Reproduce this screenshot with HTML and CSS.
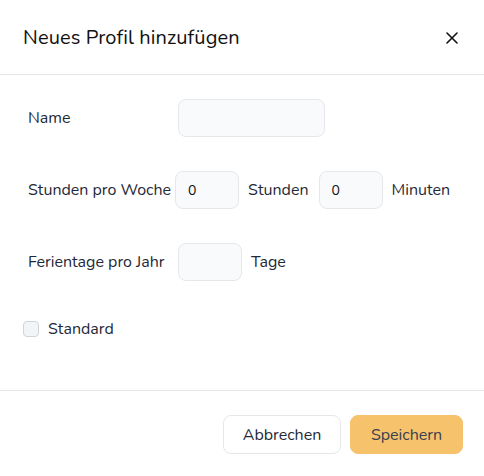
FILE: index.html
```html
<!DOCTYPE html>
<html lang="de">
<head>
<meta charset="utf-8">
<link rel="stylesheet" href="styles.css">
</head>
<body>
<div class="modal">
  <div class="header">
    <h2 class="title">Neues Profil hinzufügen</h2>
    <button class="close" aria-label="Schließen">
      <svg width="12" height="12" viewBox="0 0 12 12"><path d="M1 1L11 11M11 1L1 11" stroke="#111" stroke-width="1.6" stroke-linecap="round"/></svg>
    </button>
  </div>
  <div class="body">
    <div class="row">
      <label class="label">Name</label>
      <input class="input wide" type="text">
    </div>
    <div class="row">
      <label class="label label-auto">Stunden pro Woche</label>
      <input class="input small" type="text" value="0">
      <span class="unit">Stunden</span>
      <input class="input small" type="text" value="0">
      <span class="unit">Minuten</span>
    </div>
    <div class="row">
      <label class="label">Ferientage pro Jahr</label>
      <input class="input small" type="text">
      <span class="unit">Tage</span>
    </div>
    <div class="check-row">
      <span class="checkbox"></span>
      <span class="check-label">Standard</span>
    </div>
  </div>
  <div class="footer">
    <button class="btn btn-cancel">Abbrechen</button>
    <button class="btn btn-save">Speichern</button>
  </div>
</div>
</body>
</html>
```
FILE: styles.css
```css
* { box-sizing: border-box; }
html, body { margin: 0; padding: 0; background: #fff; }
body {
  font-family: "Nunito", "Lato", "Noto Sans", sans-serif;
  color: #1f2937;
  width: 484px;
  height: 476px;
  overflow: hidden;
}
.modal { width: 484px; }
.header {
  height: 75px;
  display: flex;
  align-items: center;
  justify-content: space-between;
  padding: 0 24px 0 23px;
  border-bottom: 1px solid #e5e7eb;
}
.title {
  margin: 0;
  font-size: 20px;
  font-weight: 400;
  color: #111;
  letter-spacing: 0.1px;
}
.close {
  border: 0;
  background: none;
  padding: 0;
  width: 16px;
  height: 16px;
  display: flex;
  align-items: center;
  justify-content: center;
  margin-top: 2px;
}
.body {
  padding: 24px 23px 50px 23px;
  display: flex;
  flex-direction: column;
  gap: 34px;
}
.row {
  display: flex;
  align-items: center;
  height: 38px;
  padding-left: 5px;
  font-size: 16px;
}
.row > * { flex-shrink: 0; }
.label {
  min-width: 146px;
  margin-right: 4px;
  white-space: nowrap;
}
.label-auto { min-width: auto; }
.input {
  height: 38px;
  border: 1px solid #e5e7eb;
  background: #f9fafb;
  border-radius: 8px;
  padding: 0 12px;
  font-family: inherit;
  font-size: 14px;
  color: #111;
  outline: none;
}
.wide { width: 147px; }
.small { width: 64px; }
.unit { margin: 0 10px 0 9px; white-space: nowrap; }
.check-row {
  display: flex;
  align-items: center;
  gap: 9px;
  font-size: 16px;
  margin-top: 3px;
}
.checkbox {
  width: 16px;
  height: 16px;
  border: 1px solid #d1d5db;
  background: #f3f4f6;
  border-radius: 4px;
}
.footer {
  border-top: 1px solid #e5e7eb;
  display: flex;
  justify-content: flex-end;
  gap: 9px;
  padding: 24px 21px 0 0;
}
.btn {
  height: 39px;
  border-radius: 8px;
  font-family: inherit;
  font-size: 16px;
  color: #1f2937;
  cursor: pointer;
}
.btn-cancel {
  width: 118px;
  background: #fff;
  border: 1px solid #e5e7eb;
}
.btn-save {
  width: 113px;
  background: #f6c26b;
  border: 1px solid #f6c26b;
  color: #374151;
}
```
